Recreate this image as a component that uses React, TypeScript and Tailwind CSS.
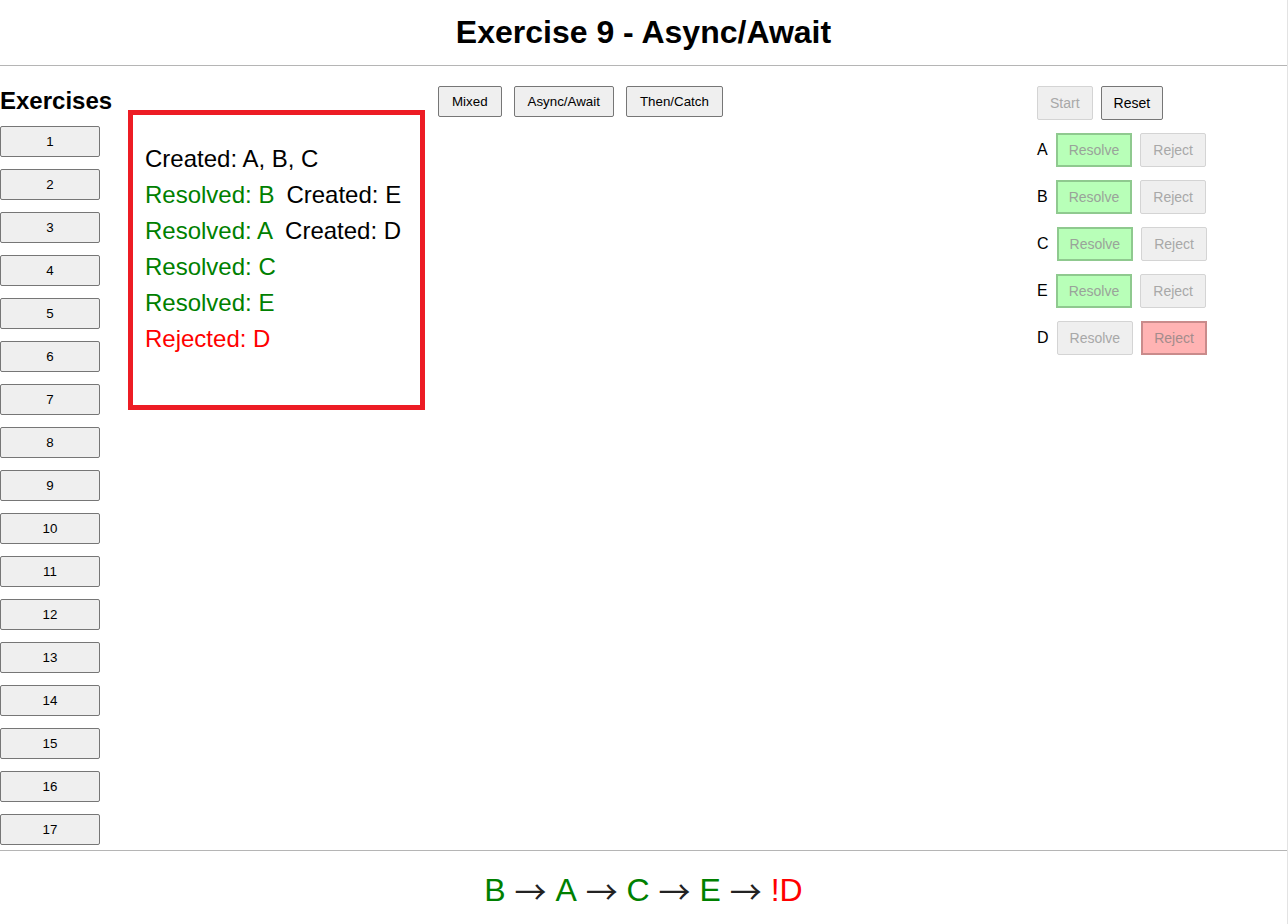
import React from 'react';

type PromiseRow = {
  label: string;
  state: 'resolved' | 'rejected';
};

const rows: PromiseRow[] = [
  { label: 'A', state: 'resolved' },
  { label: 'B', state: 'resolved' },
  { label: 'C', state: 'resolved' },
  { label: 'E', state: 'resolved' },
  { label: 'D', state: 'rejected' },
];

const exercises = Array.from({ length: 17 }, (_, i) => i + 1);

const Arrow = () => (
  <span className="whitespace-pre text-[#222]">
    {' '}
    <span className="font-['Noto_Sans_CJK_JP',sans-serif] leading-[37px]">→</span>{' '}
  </span>
);

const App = () => {
  return (
    <div className="w-[1288px] min-h-[924px] bg-white text-black border-r border-[#e3e3e3] font-['Liberation_Sans',Arial,sans-serif]">
      {/* Header */}
      <header className="h-[66px] border-b border-[#b5b5b5] flex items-center justify-center">
        <h1 className="text-[32px] font-bold leading-[37px]">Exercise 9 - Async/Await</h1>
      </header>

      {/* Main */}
      <main className="flex items-start">
        {/* Sidebar */}
        <aside className="w-[100px] flex flex-col pb-[5px]">
          <h2 className="mt-[21px] text-[24px] font-bold leading-[28px] whitespace-nowrap">Exercises</h2>
          <div className="mt-[11px] flex flex-col gap-3">
            {exercises.map((n) => (
              <button
                key={n}
                className="h-[31px] w-[100px] bg-[#efefef] border border-[#767676] rounded-[2px] text-[13.333px] leading-none text-black"
              >
                {n}
              </button>
            ))}
          </div>
        </aside>

        {/* Log box */}
        <div className="ml-[28px] mt-[44px] w-[297px] h-[300px] border-[5px] border-[#ed1c24] pl-3 pt-[26px] text-[24px] leading-[36px]">
          <div>Created: A, B, C</div>
          <div>
            <span className="text-[#008000]">Resolved: B</span>
            <span className="ml-3">Created: E</span>
          </div>
          <div>
            <span className="text-[#008000]">Resolved: A</span>
            <span className="ml-3">Created: D</span>
          </div>
          <div className="text-[#008000]">Resolved: C</div>
          <div className="text-[#008000]">Resolved: E</div>
          <div className="text-[#ff0000]">Rejected: D</div>
        </div>

        {/* Mode buttons */}
        <div className="ml-[13px] mt-[20px] flex gap-3">
          {['Mixed', 'Async/Await', 'Then/Catch'].map((label) => (
            <button
              key={label}
              className="h-[31px] px-[13px] bg-[#efefef] border border-[#767676] rounded-[2px] text-[13.333px] leading-none text-black"
            >
              {label}
            </button>
          ))}
        </div>

        <div className="flex-1" />

        {/* Controls */}
        <div className="w-[250px] mt-[20px] flex flex-col gap-[13px] text-[14px]">
          <div className="flex gap-2">
            <button className="h-[34px] px-3 bg-[#efefef] border border-[#d4d4d4] rounded-[2px] text-[#a8a8a8] leading-4">
              Start
            </button>
            <button className="h-[34px] px-3 bg-[#efefef] border border-[#767676] rounded-[2px] text-black leading-4">
              Reset
            </button>
          </div>
          {rows.map((row) => (
            <div key={row.label} className="flex items-center gap-2">
              <span className="text-[16px] leading-[18px]">{row.label}</span>
              {row.state === 'resolved' ? (
                <>
                  <button className="h-[34px] px-[11px] bg-[#b8ffb8] border-2 border-[#8fc98f] text-[#9aa39a] leading-4">
                    Resolve
                  </button>
                  <button className="h-[34px] px-3 bg-[#efefef] border border-[#d4d4d4] rounded-[2px] text-[#a8a8a8] leading-4">
                    Reject
                  </button>
                </>
              ) : (
                <>
                  <button className="h-[34px] px-3 bg-[#efefef] border border-[#d4d4d4] rounded-[2px] text-[#a8a8a8] leading-4">
                    Resolve
                  </button>
                  <button className="h-[34px] px-[11px] bg-[#ffb3b3] border-2 border-[#c98b8b] text-[#a38c8c] leading-4">
                    Reject
                  </button>
                </>
              )}
            </div>
          ))}
        </div>
      </main>

      {/* Footer */}
      <footer className="border-t border-[#b5b5b5] pt-[21px] pb-5 flex justify-center text-[32px] leading-[37px]">
        <span className="text-[#008000]">B</span>
        <Arrow />
        <span className="text-[#008000]">A</span>
        <Arrow />
        <span className="text-[#008000]">C</span>
        <Arrow />
        <span className="text-[#008000]">E</span>
        <Arrow />
        <span className="text-[#ff0000]">!D</span>
      </footer>
    </div>
  );
};

export default App;
